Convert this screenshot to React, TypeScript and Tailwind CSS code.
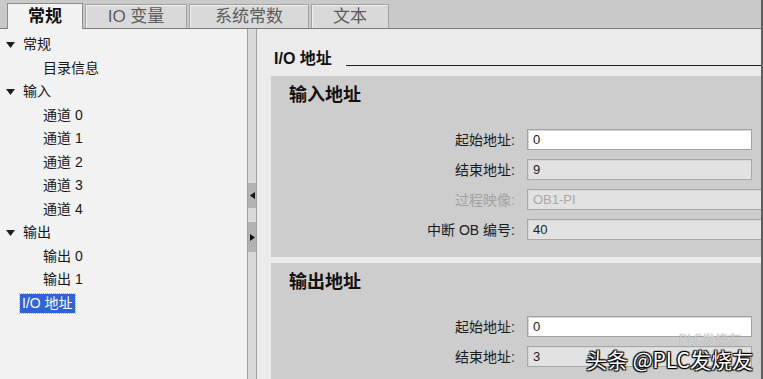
import React from 'react';

interface TreeRow {
  label: string;
  level: 0 | 1;
  open?: boolean;
  selected?: boolean;
}

interface FieldRow {
  label: string;
  value: string;
  kind: 'edit' | 'readonly' | 'disabled';
  wide?: boolean;
}

const TREE: TreeRow[] = [
  { label: '常规', level: 0, open: true },
  { label: '目录信息', level: 1 },
  { label: '输入', level: 0, open: true },
  { label: '通道 0', level: 1 },
  { label: '通道 1', level: 1 },
  { label: '通道 2', level: 1 },
  { label: '通道 3', level: 1 },
  { label: '通道 4', level: 1 },
  { label: '输出', level: 0, open: true },
  { label: '输出 0', level: 1 },
  { label: '输出 1', level: 1 },
  { label: 'I/O 地址', level: 0, selected: true },
];

const INPUT_FIELDS: FieldRow[] = [
  { label: '起始地址:', value: '0', kind: 'edit' },
  { label: '结束地址:', value: '9', kind: 'readonly' },
  { label: '过程映像:', value: 'OB1-PI', kind: 'disabled', wide: true },
  { label: '中断 OB 编号:', value: '40', kind: 'readonly', wide: true },
];

const OUTPUT_FIELDS: FieldRow[] = [
  { label: '起始地址:', value: '0', kind: 'edit' },
  { label: '结束地址:', value: '3', kind: 'readonly' },
];

const TABS = [
  { label: '常规', w: 'w-[76px]', active: true },
  { label: 'IO 变量', w: 'w-[102px]' },
  { label: '系统常数', w: 'w-[120px]' },
  { label: '文本', w: 'w-[78px]' },
];

const DownArrow = () => (
  <svg width="9" height="6" viewBox="0 0 9 6" className="shrink-0">
    <polygon points="0,0 9,0 4.5,6" fill="#1e1e1e" />
  </svg>
);

const Field = ({ row }: { row: FieldRow }) => {
  const box =
    row.kind === 'edit'
      ? 'bg-white border-[#a3a3a3]'
      : 'bg-[#e2e2e2] border-[#a8a8a8]';
  return (
    <div className="h-[21px] flex items-center">
      <div
        className={`w-[244px] shrink-0 text-right text-[14px] leading-none ${
          row.kind === 'disabled' ? 'text-[#a2a2a2]' : 'text-[#1c1c1c]'
        }`}
      >
        {row.label}
      </div>
      <div
        className={`ml-[12px] h-[21px] ${row.wide ? 'w-[240px]' : 'w-[225px]'} shrink-0 border ${box} shadow-[inset_1px_1px_0_#d6d6d6] flex items-center pl-[5px] text-[13px] ${
          row.kind === 'disabled' ? 'text-[#a8a8a8]' : 'text-[#222]'
        }`}
      >
        {row.value}
      </div>
    </div>
  );
};

const Section = ({ title, fields }: { title: string; fields: FieldRow[] }) => (
  <div className="bg-[#cdcdcd] pt-[8px] pb-[17px] overflow-hidden">
    <div className="h-[22px] flex items-center pl-[18px] text-[18px] font-bold text-[#111]">{title}</div>
    <div className="mt-[23px] flex flex-col gap-[9px]">
      {fields.map((f) => (
        <Field key={f.label + f.value} row={f} />
      ))}
    </div>
  </div>
);

export default function App() {
  return (
    <div className="relative w-[763px] h-[379px] overflow-hidden flex bg-[#ebebeb] font-['Liberation_Sans','Noto_Sans_CJK_SC',sans-serif]">
      <div className="flex-1 flex flex-col min-w-0">
        {/* tabs */}
        <div className="h-[29px] shrink-0 flex items-end gap-[2px] pl-[7px] bg-[#c9c9c9] border-b border-[#7b7b7b]">
          {TABS.map((t) =>
            t.active ? (
              <div
                key={t.label}
                className={`${t.w} h-[26px] -mb-px flex items-center justify-center bg-[#f2f2f2] border border-b-0 border-[#8c8c8c] text-[17px] font-bold text-[#111]`}
              >
                {t.label}
              </div>
            ) : (
              <div
                key={t.label}
                className={`${t.w} h-[24px] flex items-center justify-center bg-[#d9d9d9] border border-b-0 border-[#a2a2a2] shadow-[inset_1px_1px_0_#efefef] text-[17px] text-[#5c5c5c]`}
              >
                {t.label}
              </div>
            )
          )}
        </div>

        <div className="flex-1 flex min-h-0">
          {/* tree */}
          <div className="w-[247px] shrink-0 bg-[#f2f2f2] pt-[4px] text-[14px] text-[#161616]">
            {TREE.map((r) => (
              <div
                key={r.label}
                className={`h-[23.5px] flex items-center ${r.level === 1 ? 'pl-[43px]' : r.open ? 'pl-[6px]' : 'pl-[20px]'}`}
              >
                {r.open && <DownArrow />}
                {r.selected ? (
                  <span className="bg-[#2f63d8] text-white px-[2px] leading-[19px] outline-1 outline-dotted outline-[#9db4ef]">
                    {r.label}
                  </span>
                ) : (
                  <span className={r.open ? 'ml-[8px]' : ''}>{r.label}</span>
                )}
              </div>
            ))}
          </div>

          {/* splitter */}
          <div className="w-[10px] shrink-0 flex flex-col bg-[#d9d9d9] border-x border-[#a0a0a0]">
            <div className="h-[154px] shrink-0" />
            <div className="h-[25px] shrink-0 bg-[#b3b3b3] flex items-center justify-center">
              <svg width="5" height="7" viewBox="0 0 5 7">
                <polygon points="5,0 5,7 0,3.5" fill="#111" />
              </svg>
            </div>
            <div className="h-[14px] shrink-0" />
            <div className="h-[30px] shrink-0 bg-[#b3b3b3] flex items-center justify-center">
              <svg width="5" height="7" viewBox="0 0 5 7">
                <polygon points="0,0 0,7 5,3.5" fill="#111" />
              </svg>
            </div>
          </div>

          {/* properties */}
          <div className="flex-1 min-w-0 pl-[14px] bg-[#ebebeb] overflow-hidden">
            <div className="mt-[18px] h-[20px] flex items-end">
              <span className="pl-[3px] text-[16px] font-bold leading-none text-[#111] whitespace-nowrap">I/O 地址</span>
              <div className="flex-1 ml-[14px] mb-[1px] border-b border-[#222]" />
            </div>
            <div className="mt-[9px]">
              <Section title="输入地址" fields={INPUT_FIELDS} />
            </div>
            <div className="mt-[6px]">
              <Section title="输出地址" fields={OUTPUT_FIELDS} />
            </div>
          </div>
        </div>
      </div>
      <div className="w-[2px] shrink-0 bg-[#5e5e5e]" />

      {/* watermark */}
      <div className="absolute right-[22px] bottom-[34px] text-[13px] leading-none text-white/60 [text-shadow:0_0_1px_#888] font-['Noto_Sans_CJK_SC',sans-serif]">
        PLC发烧友
      </div>
      <div className="absolute right-[10px] bottom-[9px] text-[21px] leading-none text-white font-['Noto_Sans_CJK_SC',sans-serif] [text-shadow:0_0_1px_#000,1px_1px_1px_#000,-1px_-1px_1px_#000,1px_-1px_1px_#000,-1px_1px_1px_#000]">
        头条 @PLC发烧友
      </div>
    </div>
  );
}
